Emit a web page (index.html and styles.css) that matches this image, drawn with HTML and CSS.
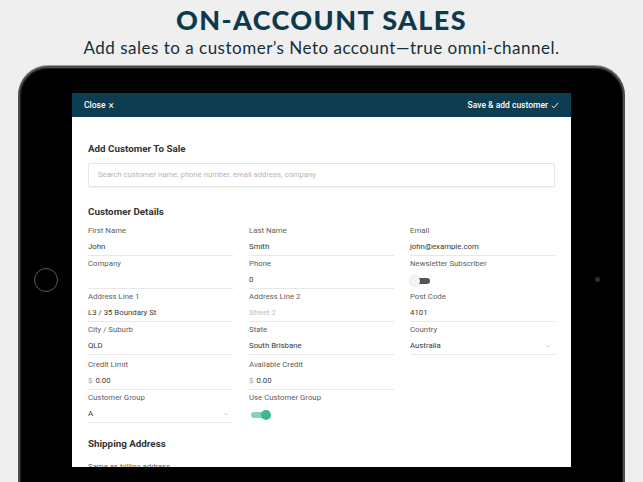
FILE: index.html
```html
<!DOCTYPE html>
<html>
<head>
<meta charset="utf-8">
<link rel="stylesheet" href="styles.css">
</head>
<body>
<header class="promo">
  <h1 class="promo-title">ON-ACCOUNT SALES</h1>
  <p class="promo-sub">Add sales to a customer’s Neto account—true omni-channel.</p>
</header>
<div class="tablet">
  <div class="bezel bezel-left"><div class="home-btn"></div></div>
  <div class="screen">
    <div class="topbar">
      <span class="topbar-btn">Close <span class="x">×</span></span>
      <span class="topbar-btn">Save &amp; add customer <svg class="check" width="8" height="7" viewBox="0 0 8 7"><path d="M0.8 3.8 L2.9 5.8 L7.2 0.9" fill="none" stroke="#fff" stroke-width="0.9"/></svg></span>
    </div>
    <div class="content">
      <h2 class="section-title">Add Customer To Sale</h2>
      <div class="search">Search customer name, phone number, email address, company</div>
      <h2 class="section-title details">Customer Details</h2>
      <div class="grid">
        <div class="field"><div class="label">First Name</div><div class="value">John</div></div>
        <div class="field"><div class="label">Last Name</div><div class="value">Smith</div></div>
        <div class="field"><div class="label">Email</div><div class="value">john@example.com</div></div>

        <div class="field"><div class="label">Company</div><div class="value"></div></div>
        <div class="field"><div class="label">Phone</div><div class="value">0</div></div>
        <div class="field"><div class="label">Newsletter Subscriber</div><div class="toggle-row"><span class="toggle off"><span class="knob"></span></span></div></div>

        <div class="field"><div class="label">Address Line 1</div><div class="value">L3 / 35 Boundary St</div></div>
        <div class="field"><div class="label">Address Line 2</div><div class="value placeholder">Street 2</div></div>
        <div class="field"><div class="label">Post Code</div><div class="value">4101</div></div>

        <div class="field"><div class="label">City / Suburb</div><div class="value">QLD</div></div>
        <div class="field"><div class="label">State</div><div class="value">South Brisbane</div></div>
        <div class="field"><div class="label">Country</div><div class="value select">Australia<svg class="chev" width="6" height="4" viewBox="0 0 6 4"><path d="M0.6 0.8 L3 3 L5.4 0.8" fill="none" stroke="#c4c4c4" stroke-width="0.8"/></svg></div></div>

        <div class="field gap-top"><div class="label">Credit Limit</div><div class="value money"><span class="cur">$</span> 0.00</div></div>
        <div class="field gap-top"><div class="label">Available Credit</div><div class="value money"><span class="cur">$</span> 0.00</div></div>
        <div class="field gap-top"></div>

        <div class="field"><div class="label">Customer Group</div><div class="value select">A<svg class="chev" width="6" height="4" viewBox="0 0 6 4"><path d="M0.6 0.8 L3 3 L5.4 0.8" fill="none" stroke="#c4c4c4" stroke-width="0.8"/></svg></div></div>
        <div class="field"><div class="label">Use Customer Group</div><div class="toggle-row"><span class="toggle on"><span class="knob"></span></span></div></div>
        <div class="field"></div>
      </div>
      <h2 class="section-title shipping">Shipping Address</h2>
      <div class="label">Same as billing address</div>
    </div>
  </div>
  <div class="bezel bezel-right"><div class="camera"></div></div>
</div>
</body>
</html>
```
FILE: styles.css
```css
html, body {
  margin: 0;
  padding: 0;
  overflow: hidden;
}
body {
  width: 643px;
  height: 482px;
  background: #efefef;
  font-family: Roboto, "Liberation Sans", sans-serif;
}
.promo {
  text-align: center;
  padding-top: 4px;
}
.promo-title {
  margin: 0;
  font-family: Lato, "Liberation Sans", sans-serif;
  font-weight: 900;
  font-size: 27px;
  line-height: 32px;
  letter-spacing: 1.4px;
  color: #0d3a4b;
}
.promo-sub {
  margin: 2px 0 0;
  font-family: Lato, "Liberation Sans", sans-serif;
  font-size: 17px;
  line-height: 20px;
  letter-spacing: 0.5px;
  color: #14303c;
}
.tablet {
  margin: 8px 0 0 18px;
  width: 603px;
  height: 440px;
  border: 2px solid #4d4d4d;
  border-radius: 30px;
  background: #000;
  box-shadow: inset 0 0 0 1px #1a1a1a, 0 -1px 0 #9a9a9a;
  display: flex;
  align-items: flex-start;
  padding-top: 25px;
  box-sizing: content-box;
}
.bezel {
  width: 52px;
  flex: none;
  display: flex;
  flex-direction: column;
  align-items: center;
}
.bezel-left {
  padding-top: 175px;
}
.home-btn {
  width: 22px;
  height: 22px;
  border: 1.5px solid #5a5a5a;
  border-radius: 50%;
}
.bezel-right {
  padding-top: 184px;
}
.camera {
  width: 5px;
  height: 5px;
  border-radius: 50%;
  background: #2b2f38;
}
.screen {
  width: 499px;
  height: 374px;
  flex: none;
  background: #fff;
  overflow: hidden;
}
.topbar {
  height: 24px;
  background: #0d3d50;
  display: flex;
  justify-content: space-between;
  align-items: center;
  padding: 0 12px;
  color: #fff;
  font-size: 8.5px;
  font-weight: 500;
}
.topbar-btn {
  display: flex;
  align-items: center;
  gap: 3px;
}
.x {
  font-size: 10px;
  font-weight: 400;
}
.content {
  padding: 26px 16px 0;
}
.section-title {
  margin: 0;
  font-size: 9.8px;
  line-height: 12px;
  font-weight: 700;
  color: #333;
}
.search {
  margin-top: 8px;
  height: 24px;
  box-sizing: border-box;
  border: 1px solid #e6e6e6;
  border-radius: 2px;
  box-shadow: 0 1px 2px rgba(0,0,0,0.06);
  padding-left: 9px;
  line-height: 22px;
  font-size: 7.7px;
  color: #b5b5b5;
}
.details {
  margin-top: 19px;
}
.grid {
  margin-top: 7px;
  display: grid;
  grid-template-columns: 145px 145px 145px;
  column-gap: 16px;
}
.field {
  margin-bottom: 2px;
}
.gap-top {
  margin-top: 2px;
}
.label {
  font-size: 7.8px;
  line-height: 12px;
  color: #5e5e5e;
}
.value {
  height: 16px;
  line-height: 16px;
  padding-top: 2px;
  box-sizing: content-box;
  border-bottom: 1px solid #e8e8e8;
  font-size: 7.8px;
  color: #383838;
  display: flex;
  align-items: center;
  justify-content: space-between;
}
.value.placeholder {
  color: #c0c0c0;
}
.value.money {
  justify-content: flex-start;
}
.cur {
  color: #999;
  margin-right: 3px;
}
.chev {
  margin-right: 4px;
}
.toggle-row {
  height: 14px;
  padding-top: 4px;
  display: flex;
  align-items: center;
}
.toggle {
  position: relative;
  width: 18px;
  height: 6px;
  margin-left: 2px;
  border-radius: 3px;
  display: block;
}
.toggle.off {
  background: #555;
}
.toggle.on {
  background: #86d1b8;
}
.knob {
  position: absolute;
  top: -2px;
  width: 10px;
  height: 10px;
  border-radius: 50%;
}
.toggle.off .knob {
  left: -2px;
  background: #f4f4f4;
  box-shadow: 0 0 2px rgba(0,0,0,0.25);
}
.toggle.on .knob {
  right: -2px;
  background: #3cb792;
}
.shipping {
  margin-top: 13px;
  margin-bottom: 11px;
}
```
